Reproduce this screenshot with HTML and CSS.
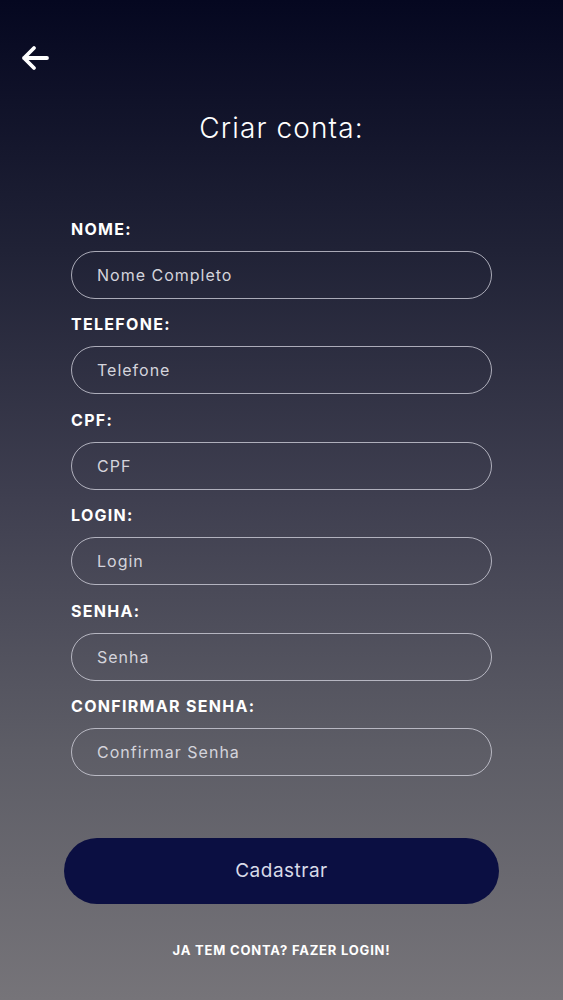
FILE: index.html
```html
<!DOCTYPE html>
<html>
  <head>
    <title>Criar conta</title>
    <meta name="viewport" content="width=device-width, initial-scale=1.0" />
    <link rel="stylesheet" href="styles.css">
  </head>
  <body>
    <div class="screen">
      <div class="top-bar">
        <a href="#" class="back-btn" aria-label="Voltar">
          <svg width="28" height="26" viewBox="0 0 28 26">
            <path d="M26 13H3M13 3L3 13l10 10" fill="none" stroke="#fff" stroke-width="3.8" stroke-linecap="round" stroke-linejoin="round" />
          </svg>
        </a>
      </div>

      <h1 class="title">Criar conta:</h1>

      <form class="form">
        <div class="field">
          <label>NOME:</label>
          <input type="text" placeholder="Nome Completo" />
        </div>
        <div class="field">
          <label>TELEFONE:</label>
          <input type="text" placeholder="Telefone" />
        </div>
        <div class="field">
          <label>CPF:</label>
          <input type="text" placeholder="CPF" />
        </div>
        <div class="field">
          <label>LOGIN:</label>
          <input type="text" placeholder="Login" />
        </div>
        <div class="field">
          <label>SENHA:</label>
          <input type="password" placeholder="Senha" />
        </div>
        <div class="field">
          <label>CONFIRMAR SENHA:</label>
          <input type="password" placeholder="Confirmar Senha" />
        </div>

        <button type="button" class="submit-btn">Cadastrar</button>
      </form>

      <a href="#" class="login-link">JA TEM CONTA? FAZER LOGIN!</a>
    </div>
  </body>
</html>
```

FILE: styles.css
```css
body {
  margin: 0;
  font-family: Inter, "Open Sans", sans-serif;
  color: white;
}
.screen {
  min-height: 1000px;
  box-sizing: border-box;
  padding: 45px 0 0;
  background: linear-gradient(180deg, #050720 0%, #202236 25%, #3f3f50 50%, #5d5d66 75%, #767479 100%);
  display: flex;
  flex-direction: column;
  align-items: center;
}
.top-bar {
  align-self: stretch;
  padding-left: 21px;
  height: 26px;
}
.back-btn {
  display: inline-block;
}
.back-btn svg {
  display: block;
}
.title {
  margin: 40px 0 0;
  font-size: 28px;
  line-height: 34px;
  font-weight: 300;
  letter-spacing: 1.1px;
}
.form {
  width: 421px;
  margin-top: 74px;
  display: flex;
  flex-direction: column;
  gap: 15.4px;
}
.field {
  display: flex;
  flex-direction: column;
  gap: 12px;
}
.field label {
  font-size: 16px;
  line-height: 20px;
  font-weight: 700;
  letter-spacing: 1.3px;
}
.field input {
  box-sizing: border-box;
  height: 48px;
  border: 1.5px solid rgba(215, 215, 225, 0.75);
  border-radius: 24px;
  background: transparent;
  padding: 0 25px;
  font-family: inherit;
  font-size: 16px;
  letter-spacing: 1px;
  color: white;
}
.field input::placeholder {
  color: #d4d4dc;
}
.submit-btn {
  align-self: center;
  width: 435px;
  height: 66px;
  margin-top: 46.6px;
  border: none;
  border-radius: 33px;
  background: #0b0f42;
  color: #d8dae8;
  font-family: inherit;
  font-size: 19px;
  font-weight: 400;
  letter-spacing: 0.5px;
}
.login-link {
  margin-top: 38px;
  font-size: 13px;
  line-height: 16px;
  font-weight: 700;
  letter-spacing: 0.8px;
  color: white;
  text-decoration: none;
}
```
